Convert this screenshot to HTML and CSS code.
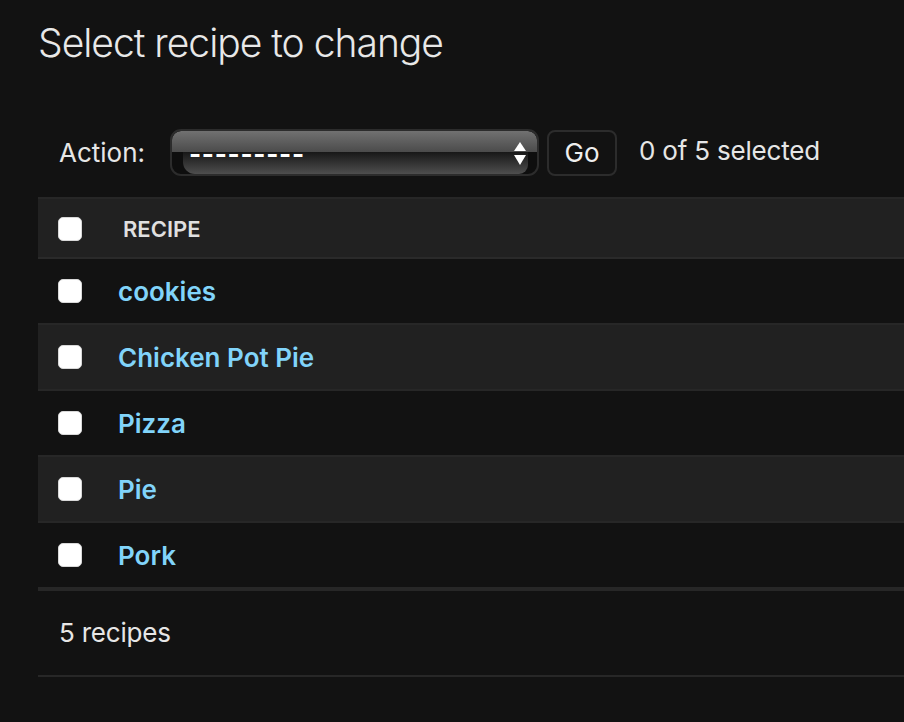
FILE: index.html
```html
<!DOCTYPE html>
<html lang="en">
<head>
<meta charset="utf-8">
<title>Select recipe to change</title>
<link rel="stylesheet" href="styles.css">
</head>
<body>
<div class="content">
  <h1 class="title">Select recipe to change</h1>
  <div class="actions">
    <span class="action-label">Action:</span>
    <div class="select">
      <div class="gloss">
        <div class="gloss-top"></div>
        <div class="gloss-bottom"></div>
      </div>
      <div class="select-face">
        <span class="select-value">---------</span>
        <svg class="select-arrows" width="12" height="24" viewBox="0 0 12 24"><polygon points="6,0 12,9 0,9" fill="#fff"/><polygon points="0,13 12,13 6,23" fill="#fff"/></svg>
      </div>
    </div>
    <button class="go">Go</button>
    <span class="counter">0 of 5 selected</span>
  </div>
  <table class="results">
    <thead>
      <tr>
        <th class="col-check"><input type="checkbox" class="cb"></th>
        <th class="col-name">RECIPE</th>
      </tr>
    </thead>
    <tbody>
      <tr><td class="col-check"><input type="checkbox" class="cb"></td><td class="col-link"><a href="#">cookies</a></td></tr>
      <tr class="alt"><td class="col-check"><input type="checkbox" class="cb"></td><td class="col-link"><a href="#">Chicken Pot Pie</a></td></tr>
      <tr><td class="col-check"><input type="checkbox" class="cb"></td><td class="col-link"><a href="#">Pizza</a></td></tr>
      <tr class="alt"><td class="col-check"><input type="checkbox" class="cb"></td><td class="col-link"><a href="#">Pie</a></td></tr>
      <tr><td class="col-check"><input type="checkbox" class="cb"></td><td class="col-link"><a href="#">Pork</a></td></tr>
    </tbody>
  </table>
  <p class="paginator">5 recipes</p>
</div>
</body>
</html>
```
FILE: styles.css
```css
html, body {
  margin: 0;
  background: #121212;
}
body {
  font-family: Inter, "Noto Sans", "Liberation Sans", sans-serif;
  color: #eeeeee;
}
.content {
  padding: 19px 0 0 38px;
}
.title {
  margin: 0;
  font-size: 39px;
  font-weight: 300;
  letter-spacing: -1px;
  line-height: 48px;
  color: #e8e8e8;
}
.actions {
  margin-top: 62px;
  padding-left: 21px;
  display: flex;
  align-items: center;
  height: 47px;
  font-size: 26px;
}
.action-label {
  width: 111px;
  color: #e6e6e6;
}
.select {
  display: grid;
  width: 369px;
  height: 47px;
  box-sizing: border-box;
  border: 2px solid #2c2c2c;
  border-radius: 11px;
  background: #0e0e0e;
  overflow: hidden;
}
.gloss, .select-face {
  grid-area: 1 / 1;
}
.gloss {
  display: flex;
  flex-direction: column;
}
.gloss-top {
  height: 21px;
  background: linear-gradient(#717171, #4b4b4b);
  border-radius: 9px 9px 0 0;
}
.gloss-bottom {
  flex: 1;
  margin: 0 9px 0 11px;
  background: linear-gradient(#171717, #4e4e4e);
  border-radius: 0 0 9px 12px;
}
.select-face {
  display: flex;
  align-items: center;
  justify-content: space-between;
  padding: 0 11px 0 17px;
}
.select-value {
  color: #ffffff;
  font-size: 26px;
  font-weight: 700;
  letter-spacing: 0.7px;
  line-height: 1;
  margin-top: 3px;
}
.select-arrows {
  display: block;
  margin-top: 2px;
}
.go {
  margin-left: 8px;
  width: 70px;
  height: 46px;
  box-sizing: border-box;
  border: 2px solid #2c2c2c;
  border-radius: 8px;
  background: #121212;
  color: #eeeeee;
  font-family: inherit;
  font-size: 26px;
  padding: 0;
}
.counter {
  margin-left: 22px;
  color: #e6e6e6;
  margin-top: -4px;
  letter-spacing: -0.2px;
}
.results {
  margin-top: 21px;
  width: 100%;
  border-collapse: collapse;
}
.results th, .results td {
  padding: 0;
  text-align: left;
  vertical-align: middle;
}
.results thead th {
  height: 56px;
  background: #212121;
  border-top: 2px solid #272727;
  border-bottom: 2px solid #2a2a2a;
  font-size: 22px;
  font-weight: 600;
  color: #e0e0e0;
  padding-top: 2px;
}
.results tbody td {
  height: 64px;
  border-bottom: 2px solid #272727;
}
.results tbody tr.alt td {
  background: #212121;
}
.col-check {
  width: 80px;
  padding-left: 20px !important;
  box-sizing: border-box;
}
.col-name {
  padding-left: 5px !important;
}
.cb {
  appearance: none;
  -webkit-appearance: none;
  display: block;
  width: 24px;
  height: 24px;
  margin: 0;
  border-radius: 5px;
  background: #ffffff;
  border: 1px solid #d8d8d8;
  box-sizing: border-box;
}
.col-link a {
  color: #81d4fa;
  text-decoration: none;
  font-size: 26px;
  font-weight: 600;
}
.paginator {
  margin: 0;
  border-top: 2px solid #272727;
  border-bottom: 2px solid #272727;
  padding: 20px 21px;
  line-height: 44px;
  font-size: 26px;
  color: #e6e6e6;
  letter-spacing: -0.2px;
}
```
